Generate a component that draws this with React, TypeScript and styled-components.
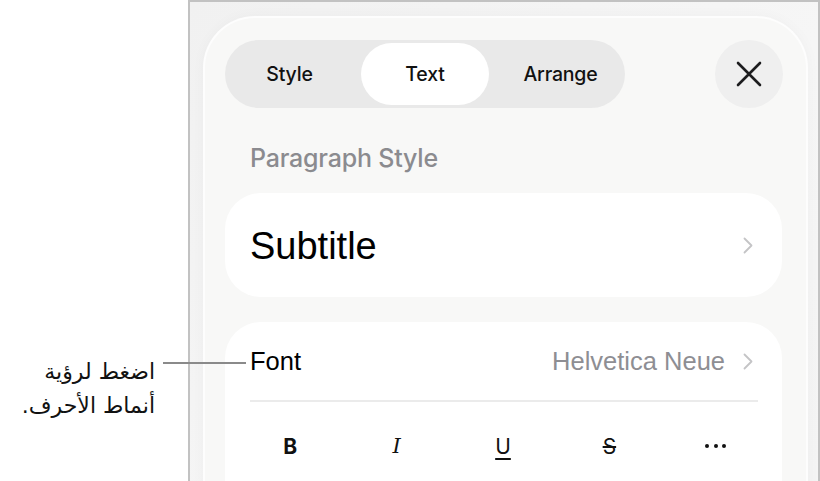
import React, { useState } from 'react';
import styled, { createGlobalStyle } from 'styled-components';

const GlobalStyle = createGlobalStyle`
  html, body {
    margin: 0;
    padding: 0;
    background: #fff;
  }
  body {
    font-family: Inter, "Liberation Sans", sans-serif;
    -webkit-font-smoothing: antialiased;
  }
`;

const Page = styled.div`
  position: relative;
  width: 820px;
  height: 481px;
  display: flex;
  overflow: hidden;
  background: #fff;
`;

const Gutter = styled.div`
  width: 188px;
  flex-shrink: 0;
`;

const Frame = styled.div`
  flex: 1;
  display: flex;
  flex-direction: column;
  border: 2px solid #c2c2c2;
  border-bottom: none;
  background: linear-gradient(135deg, #f1f1f1 0%, #f6f6f6 60%, #f4f4f4 100%);
  padding: 14px 10px 0 13px;
  overflow: hidden;
`;

const Sheet = styled.div`
  flex: 1;
  background: #f8f8f7;
  border: 2px solid #fdfdfd;
  border-bottom: none;
  border-radius: 52px 52px 0 0;
  padding: 22px 23px 0 20px;
  display: flex;
  flex-direction: column;
  box-shadow: 0 0 14px rgba(0, 0, 0, 0.03);
`;

const TopBar = styled.div`
  display: flex;
  align-items: center;
  justify-content: space-between;
`;

const Segments = styled.div`
  width: 400px;
  height: 68px;
  box-sizing: border-box;
  padding: 3px;
  border-radius: 34px;
  background: #e9e9e9;
  display: grid;
  grid-template-columns: 133px 128px 1fr;
`;

const Segment = styled.button<{ $active?: boolean; $nudge?: number }>`
  border: none;
  border-radius: 31px;
  background: ${(p) => (p.$active ? '#fff' : 'transparent')};
  font-family: Inter, "Liberation Sans", sans-serif;
  font-size: 19.5px;
  font-weight: 500;
  color: #111;
  letter-spacing: -0.2px;
  cursor: pointer;
  padding: 0;
  padding-left: ${(p) => Math.max(p.$nudge ?? 0, 0)}px;
  padding-right: ${(p) => Math.max(-(p.$nudge ?? 0), 0)}px;
`;

const CloseButton = styled.button`
  width: 68px;
  height: 68px;
  border-radius: 50%;
  border: none;
  background: #efefef;
  display: flex;
  align-items: center;
  justify-content: center;
  padding: 0;
  cursor: pointer;
`;

const SectionLabel = styled.div`
  margin: 36px 0 0 25px;
  font-size: 25px;
  font-weight: 500;
  color: #8b8b8f;
  letter-spacing: -0.2px;
  line-height: 28px;
`;

const Card = styled.div`
  background: #fff;
  border-radius: 36px;
  width: 557px;
`;

const StyleCard = styled(Card)`
  margin-top: 21px;
  height: 104px;
  display: flex;
  align-items: center;
  justify-content: space-between;
  padding: 0 29px 0 25px;
  box-sizing: border-box;
`;

const StyleName = styled.span`
  font-family: "Liberation Sans", Arial, sans-serif;
  font-size: 38px;
  color: #000;
  margin-top: 2px;
`;

const FontCard = styled(Card)`
  margin-top: 25px;
  flex: 1;
  border-radius: 36px 36px 0 0;
  padding: 0 29px 0 25px;
  box-sizing: border-box;
`;

const FontRow = styled.div`
  height: 80px;
  display: flex;
  align-items: center;
  justify-content: space-between;
  border-bottom: 2px solid #ebebeb;
  margin-right: -5px;
  padding-right: 5px;
  box-sizing: border-box;
`;

const FontLabel = styled.span`
  font-family: "Liberation Sans", Arial, sans-serif;
  font-size: 25.5px;
  color: #000;
`;

const FontValue = styled.span`
  display: flex;
  align-items: center;
  gap: 18px;
  font-family: "Liberation Sans", Arial, sans-serif;
  font-size: 25.5px;
  color: #8e8e93;
`;

const FormatRow = styled.div`
  display: grid;
  grid-template-columns: repeat(5, 1fr);
  margin: 0 -16px 0 -13px;
  height: 88px;
  align-items: center;
`;

const FormatButton = styled.button<{ $weight?: number; $italic?: boolean; $underline?: boolean; $strike?: boolean; $serif?: boolean }>`
  border: none;
  background: transparent;
  padding: 0;
  font-family: ${(p) => (p.$serif ? '"DejaVu Serif", "Liberation Serif", serif' : 'Inter, "Liberation Sans", sans-serif')};
  font-size: 21px;
  font-weight: ${(p) => p.$weight ?? 400};
  font-style: ${(p) => (p.$italic ? 'italic' : 'normal')};
  text-decoration: ${(p) => (p.$underline ? 'underline' : p.$strike ? 'line-through' : 'none')};
  text-underline-offset: 4px;
  text-decoration-thickness: 2px;
  color: #111;
  cursor: pointer;
`;

const Dots = styled.span`
  display: flex;
  gap: 4.5px;
  justify-content: center;
  span {
    width: 4px;
    height: 4px;
    border-radius: 50%;
    background: #111;
  }
`;

const Callout = styled.div`
  position: absolute;
  top: 344px;
  left: 0;
  display: flex;
  align-items: flex-start;
`;

const CalloutText = styled.div`
  width: 155px;
  margin-top: 11px;
  text-align: right;
  direction: rtl;
  font-family: "DejaVu Sans", "Noto Sans", sans-serif;
  font-size: 22px;
  line-height: 34px;
  color: #111;
`;

const Leader = styled.div`
  width: 83px;
  height: 2px;
  margin: 18px 0 0 8px;
  background: #8a8a8a;
`;

const Chevron = ({ color = '#c4c4c6' }: { color?: string }) => (
  <svg width="10" height="17" viewBox="0 0 10 17" fill="none">
    <path d="M1.5 1.5 L8.5 8.5 L1.5 15.5" stroke={color} strokeWidth="1.8" strokeLinecap="round" strokeLinejoin="round" />
  </svg>
);

const CloseIcon = () => (
  <svg width="26" height="26" viewBox="0 0 26 26" fill="none">
    <path d="M2 2 L24 24 M24 2 L2 24" stroke="#1c1c1e" strokeWidth="2.6" strokeLinecap="round" />
  </svg>
);

const tabs = [
  { label: 'Style', nudge: -10 },
  { label: 'Text', nudge: 0 },
  { label: 'Arrange', nudge: 10 },
];

export default function App() {
  const [tab, setTab] = useState('Text');

  return (
    <>
      <GlobalStyle />
      <Page>
        <Gutter />
        <Frame>
          <Sheet>
            <TopBar>
              <Segments>
                {tabs.map((t) => (
                  <Segment
                    key={t.label}
                    $active={t.label === tab}
                    $nudge={t.nudge}
                    onClick={() => setTab(t.label)}
                  >
                    {t.label}
                  </Segment>
                ))}
              </Segments>
              <CloseButton aria-label="Close">
                <CloseIcon />
              </CloseButton>
            </TopBar>

            <SectionLabel>Paragraph Style</SectionLabel>
            <StyleCard>
              <StyleName>Subtitle</StyleName>
              <Chevron />
            </StyleCard>

            <FontCard>
              <FontRow>
                <FontLabel>Font</FontLabel>
                <FontValue>
                  Helvetica Neue
                  <Chevron />
                </FontValue>
              </FontRow>
              <FormatRow>
                <FormatButton $weight={700}>B</FormatButton>
                <FormatButton $italic $serif>I</FormatButton>
                <FormatButton $underline>U</FormatButton>
                <FormatButton $strike>S</FormatButton>
                <FormatButton>
                  <Dots>
                    <span />
                    <span />
                    <span />
                  </Dots>
                </FormatButton>
              </FormatRow>
            </FontCard>
          </Sheet>
        </Frame>

        <Callout>
          <CalloutText>
            اضغط لرؤية
            <br />
            أنماط الأحرف.
          </CalloutText>
          <Leader />
        </Callout>
      </Page>
    </>
  );
}
